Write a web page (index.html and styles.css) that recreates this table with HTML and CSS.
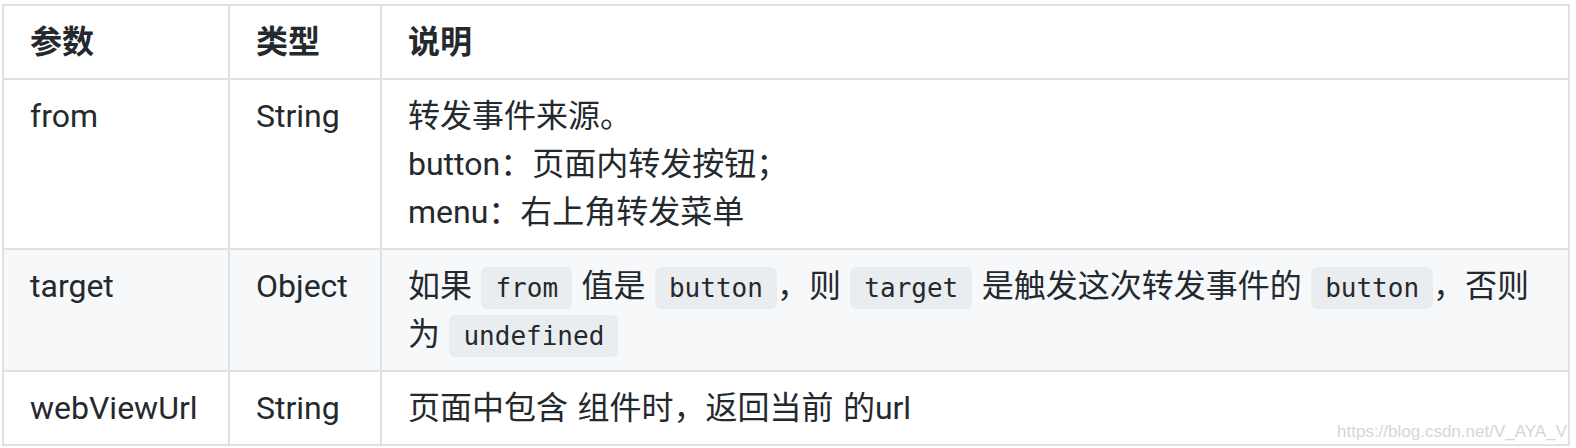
FILE: index.html
```html
<!DOCTYPE html>
<html lang="zh-CN">
<head>
<meta charset="utf-8">
<link rel="stylesheet" href="styles.css">
</head>
<body>
<div class="page">
<table class="params">
  <colgroup><col class="c1"><col class="c2"><col class="c3"></colgroup>
  <thead>
    <tr><th>参数</th><th>类型</th><th>说明</th></tr>
  </thead>
  <tbody>
    <tr>
      <td>from</td>
      <td>String</td>
      <td>转发事件来源。<br>button：页面内转发按钮；<br>menu：右上角转发菜单</td>
    </tr>
    <tr class="alt">
      <td>target</td>
      <td>Object</td>
      <td>如果 <code>from</code> 值是 <code>button</code>，则 <code>target</code> 是触发这次转发事件的 <code>button</code>，否则为 <code>undefined</code></td>
    </tr>
    <tr>
      <td>webViewUrl</td>
      <td>String</td>
      <td>页面中包含 组件时，返回当前 的url</td>
    </tr>
  </tbody>
</table>
<div class="watermark">https://blog.csdn.net/V_AYA_V</div>
</div>
</body>
</html>
```
FILE: styles.css
```css
html, body {
  margin: 0;
  background: #ffffff;
}
body {
  padding: 4px 0 0 2px;
}
.page {
  position: relative;
  width: 1568px;
}
.params {
  border-collapse: collapse;
  table-layout: fixed;
  width: 1568px;
  font-family: Roboto, "Noto Sans CJK SC", sans-serif;
  font-size: 32px;
  line-height: 48px;
  word-spacing: 1.5px;
  color: #24292e;
}
.c1 { width: 226px; }
.c2 { width: 152px; }
.params th, .params td {
  border: 2px solid #dfe2e5;
  padding: 12px 26px;
  text-align: left;
  vertical-align: top;
}
.params th {
  font-weight: 600;
}
.params tr.alt {
  background: #f6f8fa;
}
.params code {
  display: inline-block;
  font-family: "DejaVu Sans Mono", monospace;
  font-size: 26px;
  line-height: 30px;
  word-spacing: 0;
  background: rgba(27, 31, 35, 0.05);
  border-radius: 6px;
  padding: 6px 14px;
  vertical-align: baseline;
}
.watermark {
  position: absolute;
  right: 3px;
  bottom: 4px;
  font-family: "Liberation Sans", Arial, sans-serif;
  font-size: 17px;
  line-height: 20px;
  color: #d6d6d6;
}
```
